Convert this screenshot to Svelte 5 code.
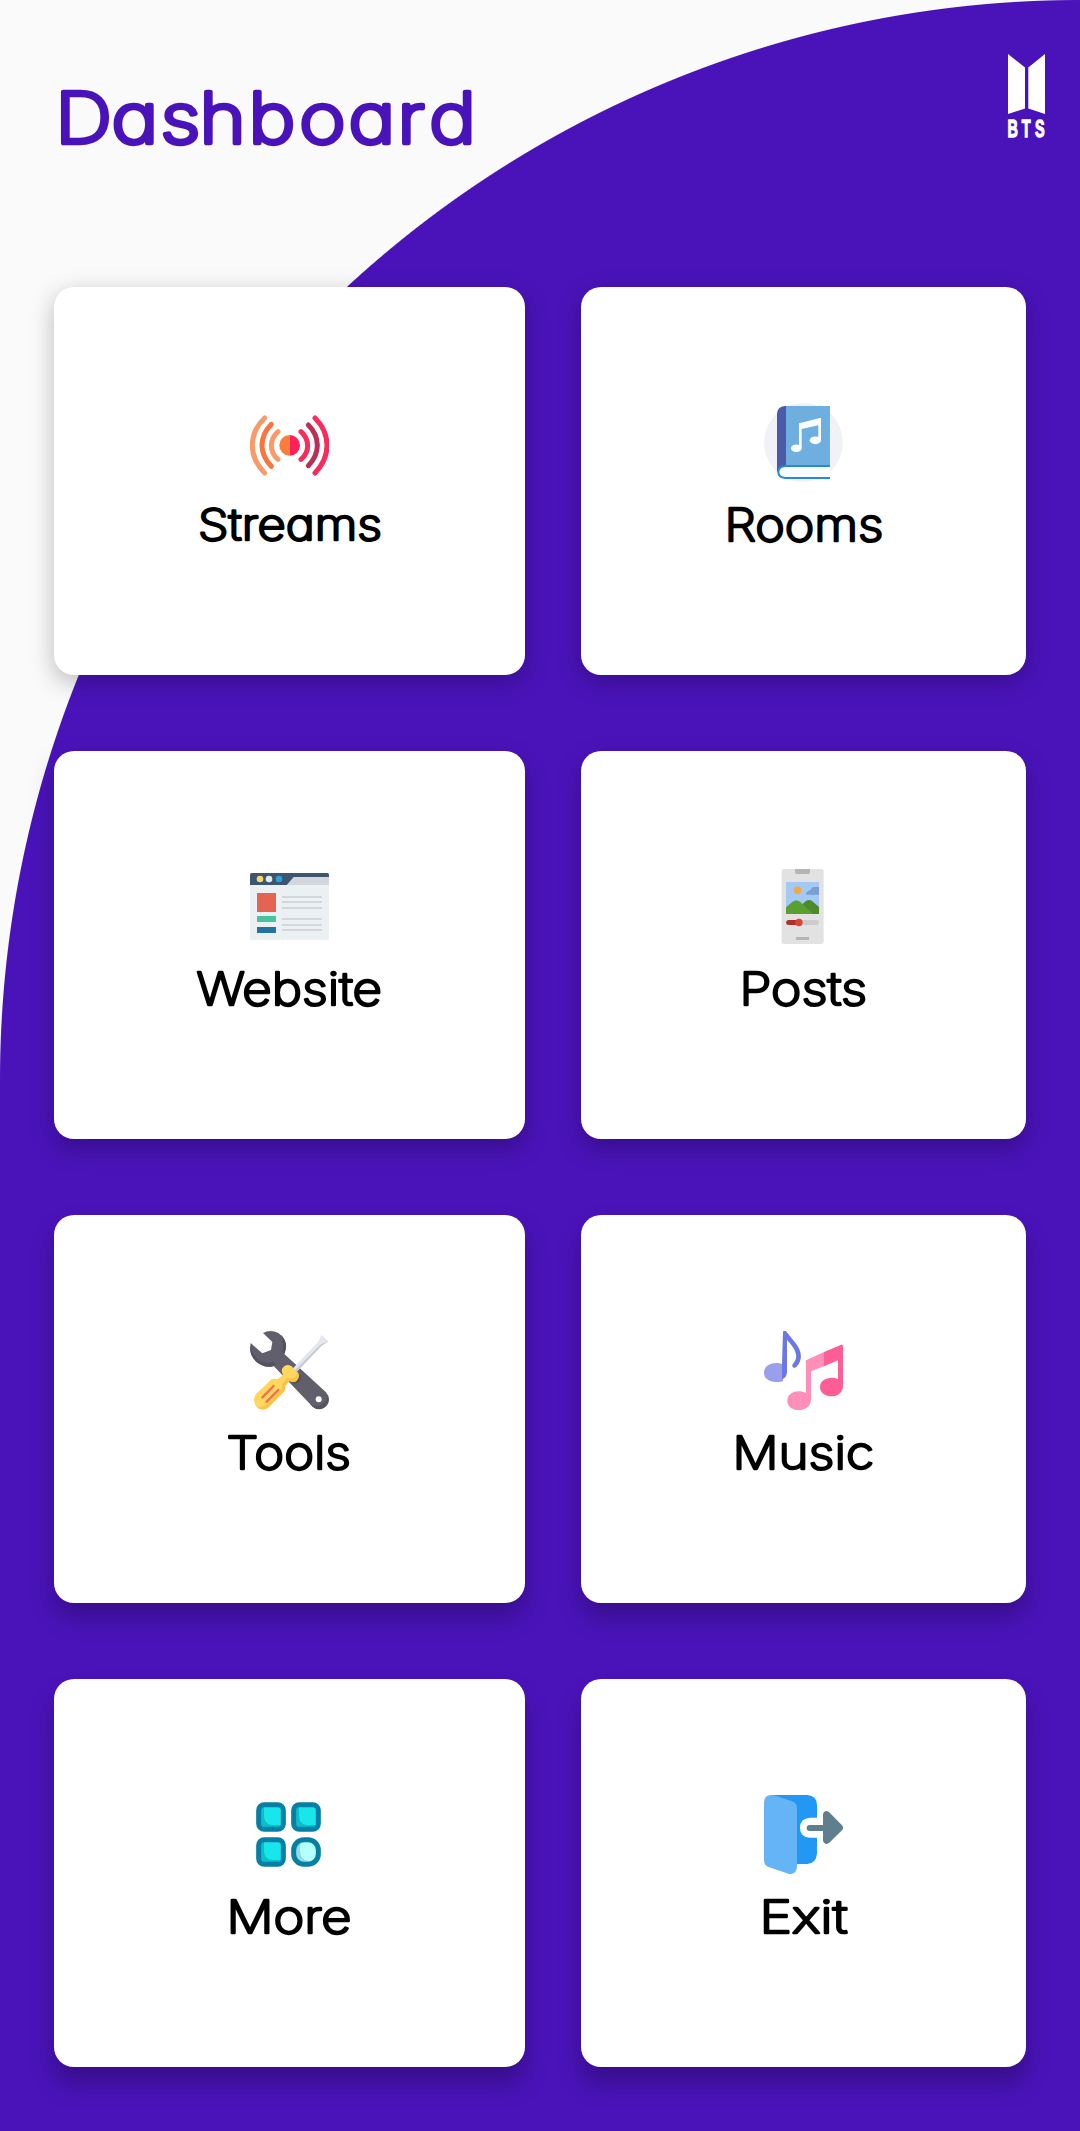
<script>
  // Each label is fitted to its own width; x and w are in label units.
  const cards = [
    { name: 'Streams', icon: 'streams', box: '210 45 237 237', x: 8, w: 184, size: 43 },
    { name: 'Rooms', icon: 'rooms', box: '192 69 237 237', x: 20.5, w: 159, size: 45.5 },
    { name: 'Website', icon: 'website', box: '210 51 237 237', x: 6.5, w: 185.5, size: 45.5 },
    { name: 'Posts', icon: 'posts', box: '192 51 237 237', x: 35.5, w: 127.5, size: 45.5 },
    { name: 'Tools', icon: 'tools', box: '210 63 237 237', x: 36.5, w: 124.5, size: 45.5 },
    { name: 'Music', icon: 'music', box: '192 63 237 237', x: 28.5, w: 141.5, size: 45.5 },
    { name: 'More', icon: 'more', box: '210 45 237 237', x: 36.5, w: 125, size: 45.5 },
    { name: 'Exit', icon: 'exit', box: '192 45 237 237', x: 55.5, w: 88, size: 45.5 }
  ];
</script>

<main class="screen">
  <header>
    <svg class="title" width="440" height="90" viewBox="0 0 440 90" role="heading" aria-level="1">
      <text transform="scale(1.13 1)" x="1 50.8 94.3 128.8 172.1 217 260.6 304 332.2" y="67.5">Dashboard</text>
    </svg>
    <svg class="logo" width="38" height="86" viewBox="0 0 38 86" aria-label="BTS">
      <path d="M0 0 17 13.5V54.5L0 60ZM37 0 20.3 13.5V54.5L37 60Z" />
      <g transform="translate(0 83) scale(.6 1)">
        <text x="-1" y="0">B</text>
        <text x="23" y="0">T</text>
        <text x="45" y="0">S</text>
      </g>
    </svg>
  </header>

  <section class="grid">
    {#each cards as card}
      <article class="card {card.icon}">
        <svg class="icon" viewBox={card.box} aria-hidden="true">
          {#if card.icon === 'streams'}
            <g fill="none" stroke-width="15" stroke-linecap="round">
              <path stroke="#f99b68" d="M254 84Q217 120 217 166T254 249M294 125Q274 143 274 167T294 208" />
              <path stroke="#f87540" d="M274 103Q246 132 246 166T274 229" />
              <path stroke="#f72c5b" d="M405 84Q441 120 441 166T405 249M363 125Q383 143 383 167T363 208" />
              <path stroke="#b92f56" d="M385 105Q412 132 412 166T385 227" />
            </g>
            <path fill="#ff7b3d" d="M329 135a31 31 0 0 0 0 62z" />
            <path fill="#fc2158" d="M329 135a31 31 0 0 1 0 62z" />
          {:else if card.icon === 'rooms'}
            <circle cx="310.5" cy="187.500" r="118.500" fill="#f1f2f7" />
            <path fill="#4c5aaa" d="M258 78H254Q231 80 231 103V276L258 256Z" />
            <path fill="#6fafdf" d="M258 78H390V256H258Z" />
            <path fill="#fafdff" d="M390 257H255Q234 260 234 276T255 295H390Z" />
            <path fill="none" stroke="#268ad8" stroke-width="6" d="M390 258H256Q235 260 235 276T256 294H390" />
            <g fill="#fafeff">
              <path d="M297 130 363 113V181H355V136L305 147V205H297Z" />
              <ellipse cx="289" cy="205" rx="16" ry="11.500" />
              <ellipse cx="346" cy="181" rx="17" ry="11.500" />
            </g>
          {:else if card.icon === 'website'}
            <rect x="210" y="69" width="237" height="201" rx="5" fill="#ebf0f3" />
            <path fill="#3d566e" d="M210 105V74q0-5 5-5H442q5 0 5 5V105Z" />
            <path fill="#d3d6dc" d="M320 105 341 81H447V105Z" />
            <circle cx="240" cy="87" r="10" fill="#fbd46c" />
            <circle cx="267" cy="87" r="10" fill="#e2eaf0" />
            <circle cx="297" cy="87" r="10" fill="#2f9fdc" />
            <path fill="#e56353" d="M231 129h57v57h-57z" />
            <path fill="#48c3a1" d="M231 198h57v18h-57z" />
            <path fill="#2274a1" d="M231 231h57v18h-57z" />
            <path stroke="#d3d6dc" stroke-width="6" d="M306 141H426M306 156H426M306 174H426M306 207H426M306 225H426M306 240H426" />
          {:else if card.icon === 'posts'}
            <rect x="245" y="57" width="126" height="225" rx="8" fill="#e2e2e2" />
            <path fill="#b5b5b5" d="M285 57H330V67q0 5-5 5H290q-5 0-5-5ZM288 261H327V270H288Z" />
            <path fill="#a3c9f4" d="M258 96H357V192H258Z" />
            <circle cx="292.500" cy="121" r="11.500" fill="#f1a943" />
            <path fill="#7a9fd3" d="M357 111H343q-9 0-11 9-14 3-14 14H357Z" />
            <path fill="#4d8a29" d="M300 192V169L318 153q9-6 18 0L357 171V192Z" />
            <path fill="#59a02e" d="M258 192V172L278 155q11-9 22 0L340 192Z" />
            <path stroke="#cbcbcb" stroke-width="15" stroke-linecap="round" d="M300 217.500H349" />
            <path stroke="#b1302d" stroke-width="15" stroke-linecap="round" d="M266 217.500H292" />
            <circle cx="297" cy="217.500" r="11" fill="#db4339" />
          {:else if card.icon === 'tools'}
            <path fill="#615f6c" d="M249 69Q270 57 295 69 317 84 317 111 317 122 313 132L438 247Q451 262 445 279 438 295 421 298 407 299 398 290L281 168Q264 174 246 166C219 152 207 128 212 99L247 130 273 120 277 96Z" />
            <path fill="#54525f" d="M211 106Q216 136 242 154 264 163 280 154L287 163 281 168Q264 174 246 166C216 152 207 128 211 106ZM303 74Q323 94 317 119L313 132 306 126Q313 101 303 74ZM443 254Q451 278 433 291 417 303 398 290L389 281Q407 292 425 285 444 274 443 254Z" />
            <path fill="#54525f" d="M345 182 362 199Q366 216 346 221L330 216Z" />
            <circle cx="416" cy="268" r="9" fill="#fff" />
            <path fill="#e4e7ee" d="M337 177 414 96 424 75 446 94 425 107 349 187Z" />
            <path fill="#c6cad6" d="M343 182 423 103 446 94 425 107 349 187Z" />
            <path fill="#ffd75e" d="M307 175Q318 159 334 168L354 188Q361 200 350 212 341 219 329 213L315 228Q318 239 310 247L266 291Q247 307 229 290 215 272 228 252L272 210Q280 204 293 208L309 194Q303 184 307 175Z" />
            <path fill="#ffc148" d="M354 188Q361 200 350 212 341 219 329 213L315 228Q318 239 310 247L266 291Q249 306 231 292 251 294 266 278L303 240Q308 232 304 222L323 203Q338 209 346 202 353 194 349 183Z" />
            <path stroke="#f36e4d" stroke-width="7" stroke-linecap="round" d="M247 262 281 228M260 275 295 240" />
          {:else if card.icon === 'music'}
            <path fill="#98a0ec" d="M249 164V213C235 219 192 218 192 188 192 159 233 154 249 164Z" />
            <path fill="#6b78e3" d="M249 65q5-5 11 1L286 98C304 120 311 148 289 171 281 178 273 168 279 161 297 143 289 119 261 90V187Q260 203 246 208V164Z" />
            <path fill="#ff8fb8" d="M318 151 372 126V169L333 184V266C333 292 312 300 297 300 276 300 262 288 262 272 262 247 294 237 318 249Z" />
            <path fill="#ff5d96" d="M372 126 424 104q5-1 5 5V227C429 246 414 259 394 259 374 259 360 247 360 231 360 208 389 197 414 207V151L372 169Z" />
          {:else if card.icon === 'more'}
            {#each [[236, 74], [341, 74], [236, 179]] as [x, y]}
              <rect {x} {y} width="74" height="74" rx="17" fill="#0bbfc9" />
              <path fill="#18e6eb" transform="translate({x} {y})" d="M16 7H67V61H39Q16 57 16 33Z" />
              <rect {x} {y} width="74" height="74" rx="17" fill="none" stroke="#057fa5" stroke-width="15" />
            {/each}
            <rect x="341" y="179" width="74" height="74" rx="31" fill="#8eddde" />
            <path fill="#b5ffff" d="M361 188Q390 176 406 196 416 223 403 238 383 250 367 235 357 220 361 188Z" />
            <rect x="341" y="179" width="74" height="74" rx="31" fill="none" stroke="#057fa5" stroke-width="15" />
          {:else}
            <path fill="#2297f3" d="M215 45H322Q351 47 351 76V113H330Q300 115 300 143T330 173H351V220Q349 250 322 252H280Z" />
            <path fill="#65b4f6" d="M192 68Q192 41 222 46L276 64Q291 69 291 85V262Q288 286 265 281L208 262Q192 257 192 240Z" />
            <path fill="#607f8e" d="M369 135V103Q374 88 387 96L426 136Q433 144 426 151L387 189Q374 197 369 183V153H329Q320 153 320 144T329 135Z" />
          {/if}
        </svg>
        <svg class="label" width="200" height="70" viewBox="0 0 200 70">
          <text x={card.x} y="59" font-size={card.size} textLength={card.w} lengthAdjust="spacingAndGlyphs">{card.name}</text>
        </svg>
      </article>
    {/each}
  </section>
</main>

<style>
  :global(body) {
    background: #fafafa;
  }

  .screen {
    box-sizing: border-box;
    width: 1080px;
    height: 2131px;
    overflow: hidden;
    background: radial-gradient(circle at 1080px 1080px, #4a13ba 1079.5px, #fafafa 1080.5px) 0 0 / 1080px 1080px no-repeat, #4a13ba;
    font-family: Inter, 'Open Sans', sans-serif;
  }

  header {
    display: flex;
    justify-content: space-between;
    align-items: flex-start;
    height: 287px;
    box-sizing: border-box;
    padding: 54px 34px 0 54px;
  }

  .title {
    margin-top: 22px;
    overflow: visible;
  }

  .title text {
    font-size: 70px;
    font-weight: 200;
    fill: #4a13ba;
    stroke: #4a13ba;
    stroke-width: 4.6px;
    stroke-linejoin: round;
    font-feature-settings: 'cv11';
  }

  .logo {
    fill: #fff;
    overflow: visible;
  }

  .logo text {
    font: bold 24px 'Liberation Sans', sans-serif;
    stroke: #fff;
    stroke-width: 1.3px;
  }

  .grid {
    display: grid;
    grid-template-columns: 471px 445px;
    grid-auto-rows: 388px;
    gap: 76px 56px;
    padding-left: 54px;
  }

  .card {
    display: flex;
    flex-direction: column;
    align-items: center;
    box-sizing: border-box;
    padding-top: 116px;
    border-radius: 20px;
    background: #fff;
    box-shadow: 0 7px 25px rgba(0, 0, 0, 0.26);
  }

  .card:nth-child(n + 3) {
    box-shadow: 0 10px 25px rgba(0, 0, 0, 0.26);
  }

  .card:nth-child(n + 5) {
    box-shadow: 0 14px 25px rgba(0, 0, 0, 0.26);
  }

  .card:nth-child(n + 7) {
    box-shadow: 0 17px 25px rgba(0, 0, 0, 0.26);
  }

  .icon {
    width: 79px;
    height: 79px;
    flex: none;
  }

  .streams {
    padding-top: 118px;
  }

  .streams .label {
    margin-top: -3px;
  }

  .label {
    flex: none;
    overflow: visible;
  }

  .label text {
    font-weight: 200;
    fill: #000;
    stroke: #000;
    stroke-width: 2.5px;
    stroke-linejoin: round;
    font-feature-settings: 'cv11';
  }
</style>
